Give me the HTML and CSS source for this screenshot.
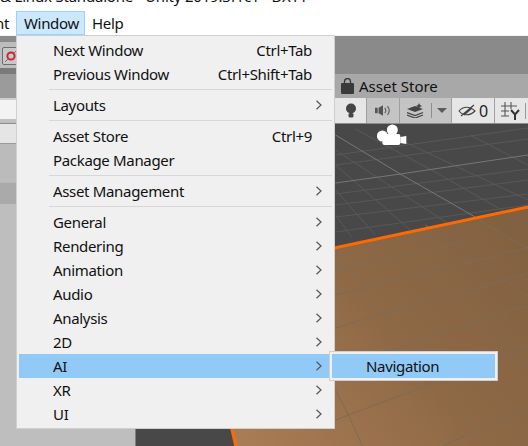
FILE: index.html
```html
<!DOCTYPE html>
<html lang="en">
<head>
<meta charset="utf-8">
<title>Unity Window menu</title>
<link rel="stylesheet" href="styles.css">
</head>
<body>
<div class="app">
  <div class="titlebar"><span class="title">&amp; Linux Standalone - Unity 2019.3f1c1 &lt;DX11&gt;</span></div>
  <div class="menubar">
    <span class="top-item cut">nt</span>
    <span class="top-item active">Window</span>
    <span class="top-item help">Help</span>
  </div>
  <div class="editor">
    <div class="left-pane">
      <div class="lp strip-a"></div>
      <div class="lp tools">
        <span class="tool-btn"><svg width="14" height="17" viewBox="0 0 14 17"><circle cx="8" cy="8" r="3.6" fill="none" stroke="#c9262f" stroke-width="2"/><path d="M2 14l3-3M11 5l3-3" stroke="#777" stroke-width="1"/></svg></span>
      </div>
      <div class="lp strip-b"></div>
      <div class="lp head"></div>
      <div class="lp line-a"></div>
      <div class="lp row-a"></div>
      <div class="lp gap-a"></div>
      <div class="lp row-b"></div>
      <div class="lp gap-b"></div>
      <div class="lp band"></div>
      <div class="lp rest"></div>
    </div>
    <div class="right-pane">
      <div class="top-strip"></div>
      <div class="tabbar">
        <svg class="bag" width="13" height="16" viewBox="0 0 13 16"><path d="M1 5h11a1 1 0 0 1 1 1v9a1 1 0 0 1-1 1H1a1 1 0 0 1-1-1V6a1 1 0 0 1 1-1z" fill="#3a3a3a"/><path d="M3.5 6V3.5a3 3 0 0 1 6 0V6" fill="none" stroke="#3a3a3a" stroke-width="1.4"/></svg>
        <span class="tab-label">Asset Store</span>
      </div>
      <div class="scene-tools">
        <div class="st st-bulb"><svg width="12" height="15" viewBox="0 0 12 15"><circle cx="6" cy="5.500" r="5" fill="#444"/><rect x="3.500" y="10" width="5" height="4.500" rx="1.500" fill="#444"/></svg></div>
        <div class="st st-audio"><svg width="16" height="11" viewBox="0 0 18 12"><path d="M0 3h3v6H0zM4 3l5-3v12L4 9z" fill="#555"/><path d="M11 3c1.400 1.800 1.400 4.200 0 6M14 1c2.400 3 2.400 7 0 10" fill="none" stroke="#555" stroke-width="1.200"/></svg></div>
        <div class="st st-fx">
          <svg width="18" height="15" viewBox="0 0 18 15"><path d="M0 6l8 3 8-3-8-3z" fill="#444"/><path d="M0 9.500l8 3 8-3M0 12l8 3 8-3" fill="none" stroke="#444" stroke-width="1.300"/><path d="M12 0l1 2 2 1-2 1-1 2-1-2-2-1 2-1z" fill="#444"/></svg>
          <i class="fx-sep"></i>
          <i class="fx-tri"></i>
        </div>
        <div class="st st-eye">
          <svg width="18" height="15" viewBox="0 0 18 15"><path d="M1 8c4-5 11-5 16 0-5 5-12 5-16 0z" fill="none" stroke="#444" stroke-width="1.100"/><path d="M3 13L16 2M6 12l8-7" stroke="#444" stroke-width="1.300"/></svg>
          <span class="count">0</span>
        </div>
        <div class="st st-gizmo">
          <svg width="20" height="19" viewBox="0 0 20 19"><path d="M4 1v14M10 1v7M0 5h16M0 10h8M0 15h8" fill="none" stroke="#555" stroke-width="1.100"/><path d="M10 9l4 4.500L18 9M14 13v6" fill="none" stroke="#333" stroke-width="2"/></svg>
          <i class="gizmo-sep"></i>
        </div>
      </div>
      <div class="scene">
        <svg class="scene-art" viewBox="135 124 393 322" preserveAspectRatio="none" aria-hidden="true">
          <defs>
            <linearGradient id="ground" gradientUnits="userSpaceOnUse" x1="528" y1="207" x2="235" y2="446">
              <stop offset="0" stop-color="#806041"/>
              <stop offset="0.5" stop-color="#8f6946"/>
              <stop offset="1" stop-color="#aa7d55"/>
            </linearGradient>
          </defs>
          <rect x="135" y="124" width="393" height="322" fill="#484848"/>
          <g class="grid-minor">
            <path d="M335 155L528 128M335 165L528 139M335 194L528 169M335 205L528 180M335 217L528 194M335 232L528 205"/>
            <path d="M355 129L435 172L528 225M400 140L528 200M335 165L410 230M335 190L375 235M335 215L352 238M470 135L528 165M335 150L450 225"/>
          </g>
          <path class="grid-major" d="M335 135L400 174L475 217M335 183L400 174L528 155"/>
          <polygon points="528,207 196,277 235,446 528,446" fill="url(#ground)"/>
          <g class="grid-brown">
            <path d="M335 270L405 255L468 240M335 295L363 288L423 273L528 248M335 328L383 313L448 297L505 280L528 273M368 355L407 345L477 322L528 305M490 357L528 350M335 420L348 415L437 382M442 446L477 431L528 408"/>
            <path d="M335 253L363 288L383 313L407 345L425 370M385 240L423 273L448 297L477 322L513 355L528 368M425 225L453 243L505 280L528 297M437 382L477 431L492 446M335 390L348 415L362 446M475 217L512 240L528 248"/>
          </g>
          <polyline class="edge" points="528,207 196,277 235,446"/>
          <g fill="#fff">
            <circle cx="382" cy="136" r="5.500"/>
            <circle cx="392" cy="130" r="5.500"/>
            <rect x="382" y="134" width="18" height="11" rx="2"/>
            <polygon points="400,137 406,136 406,144 400,143"/>
          </g>
        </svg>
      </div>
    </div>
  </div>

  <div class="menu">
    <div class="row"><span>Next Window</span><span>Ctrl+Tab</span><span></span></div>
    <div class="row"><span>Previous Window</span><span>Ctrl+Shift+Tab</span><span></span></div>
    <div class="sep"></div>
    <div class="row"><span>Layouts</span><span></span><svg class="chev" width="6" height="10" viewBox="0 0 6 10"><path d="M0.500 0.800L5 5L0.500 9.200"/></svg></div>
    <div class="sep"></div>
    <div class="row"><span>Asset Store</span><span>Ctrl+9</span><span></span></div>
    <div class="row"><span>Package Manager</span><span></span><span></span></div>
    <div class="sep"></div>
    <div class="row"><span>Asset Management</span><span></span><svg class="chev" width="6" height="10" viewBox="0 0 6 10"><path d="M0.500 0.800L5 5L0.500 9.200"/></svg></div>
    <div class="sep"></div>
    <div class="row"><span>General</span><span></span><svg class="chev" width="6" height="10" viewBox="0 0 6 10"><path d="M0.500 0.800L5 5L0.500 9.200"/></svg></div>
    <div class="row"><span>Rendering</span><span></span><svg class="chev" width="6" height="10" viewBox="0 0 6 10"><path d="M0.500 0.800L5 5L0.500 9.200"/></svg></div>
    <div class="row"><span>Animation</span><span></span><svg class="chev" width="6" height="10" viewBox="0 0 6 10"><path d="M0.500 0.800L5 5L0.500 9.200"/></svg></div>
    <div class="row"><span>Audio</span><span></span><svg class="chev" width="6" height="10" viewBox="0 0 6 10"><path d="M0.500 0.800L5 5L0.500 9.200"/></svg></div>
    <div class="row"><span>Analysis</span><span></span><svg class="chev" width="6" height="10" viewBox="0 0 6 10"><path d="M0.500 0.800L5 5L0.500 9.200"/></svg></div>
    <div class="row"><span>2D</span><span></span><svg class="chev" width="6" height="10" viewBox="0 0 6 10"><path d="M0.500 0.800L5 5L0.500 9.200"/></svg></div>
    <div class="row selected"><span>AI</span><span></span><svg class="chev" width="6" height="10" viewBox="0 0 6 10"><path d="M0.500 0.800L5 5L0.500 9.200"/></svg>
      <div class="submenu"><div class="sub-row">Navigation</div></div>
    </div>
    <div class="row"><span>XR</span><span></span><svg class="chev" width="6" height="10" viewBox="0 0 6 10"><path d="M0.500 0.800L5 5L0.500 9.200"/></svg></div>
    <div class="row"><span>UI</span><span></span><svg class="chev" width="6" height="10" viewBox="0 0 6 10"><path d="M0.500 0.800L5 5L0.500 9.200"/></svg></div>
  </div>
</div>
</body>
</html>
```

FILE: styles.css
```css
* { box-sizing: border-box; }
html, body { margin: 0; padding: 0; }
body {
  width: 528px;
  height: 446px;
  overflow: hidden;
  background: #fff;
  font-family: "Noto Sans", "Open Sans", sans-serif;
  font-size: 15px;
  letter-spacing: -0.33px;
  color: #111;
}
.app {
  position: relative;
  width: 528px;
  height: 446px;
  display: flex;
  flex-direction: column;
  overflow: hidden;
}

/* window chrome */
.titlebar {
  height: 11px;
  overflow: hidden;
  background: #fff;
  flex: none;
}
.title {
  display: block;
  margin-top: -14px;
  line-height: 20px;
  white-space: nowrap;
  font-size: 15px;
  letter-spacing: -0.2px;
}
.menubar {
  height: 24px;
  display: flex;
  background: #fff;
  flex: none;
}
.top-item {
  line-height: 22px;
  height: 24px;
  padding: 0 7px;
  border: 1px solid transparent;
}
.top-item.cut { width: 16px; padding: 0; text-indent: -5px; overflow: hidden; border: 0; line-height: 24px; }
.top-item.active {
  width: 69px;
  background: #cce8ff;
  border-color: #99d1ff;
}
.top-item.help { padding-left: 6px; }

/* editor background */
.editor {
  flex: 1;
  display: flex;
  min-height: 0;
  border-top: 1px solid #f4f4f4;
}
.left-pane {
  width: 135px;
  flex: none;
  display: flex;
  flex-direction: column;
  background: #bebebe;
}
.lp { flex: none; }
.strip-a { height: 6px; background: #8a8a8a; }
.tools { height: 26px; background: #bdbdbd; padding: 5px 0 0 2px; }
.tool-btn {
  display: block;
  width: 30px;
  height: 18px;
  background: #c8c8c8;
  border: 1px solid #6e6e6e;
  border-radius: 2px;
}
.tool-btn svg { display: block; }
.strip-b { height: 6px; background: #7a7a7a; }
.head { height: 24px; background: #9b9b9b; }
.line-a { height: 2px; background: #cfcfcf; }
.row-a { height: 19px; background: #f3f3f3; }
.gap-a { height: 5px; background: #bfbfbf; border-bottom: 1px solid #8c8c8c; }
.row-b { height: 19px; background: #e5e5e5; }
.gap-b { height: 40px; background: #bbb; border-top: 1px solid #9a9a9a; }
.band { height: 21px; background: #aaa; }
.rest { flex: 1; background: #bebebe; }

.right-pane {
  flex: 1;
  min-width: 0;
  display: flex;
  flex-direction: column;
}
.top-strip { height: 38px; background: #8a8a8a; flex: none; }
.tabbar {
  height: 24px;
  flex: none;
  background: #a8a8a8;
  display: flex;
  align-items: center;
  gap: 5px;
  padding-left: 206px;
}
.bag { flex: none; }
.tab-label { font-size: 15px; letter-spacing: 0; color: #111; white-space: nowrap; }
.scene-tools {
  height: 26px;
  flex: none;
  display: flex;
  padding-left: 200px;
  background: #dcdcdc;
  border-bottom: 1px solid #8c8c8c;
}
.st {
  display: flex;
  align-items: center;
  justify-content: center;
  border-right: 1px solid #a0a0a0;
  flex: none;
}
.st-bulb { width: 32px; background: #e6e6e6; }
.st-audio { width: 33px; background: #c4c4c4; }
.st-fx { width: 52px; background: #c4c4c4; justify-content: flex-start; padding-left: 7px; }
.fx-sep { width: 1px; height: 15px; background: #8e8e8e; margin-left: 6px; }
.fx-tri {
  width: 0;
  height: 0;
  margin-left: 5px;
  border-style: solid;
  border-width: 5px 5.500px 0;
  border-color: #5a5a5a transparent transparent;
}
.st-eye { width: 43px; background: #e6e6e6; gap: 3px; }
.count { font-size: 16px; letter-spacing: 0; color: #222; line-height: 20px; }
.st-gizmo { flex: 1; width: 34px; background: #e6e6e6; border-right: 0; justify-content: flex-start; padding-left: 6px; gap: 4px; }
.gizmo-sep { width: 1px; height: 16px; background: #999; }

.scene { flex: 1; min-height: 0; border-left: 1px solid #808080; }
.scene-art { display: block; width: 100%; height: 100%; }
.grid-minor path { fill: none; stroke: #585858; stroke-width: 1; }
.grid-major { fill: none; stroke: #767676; stroke-width: 1; }
.grid-brown path { fill: none; stroke: #7d6a56; stroke-width: 1; }
.edge { fill: none; stroke: #ff6a00; stroke-width: 3; }

/* dropdown menu */
.menu {
  position: absolute;
  left: 16px;
  top: 35px;
  width: 319px;
  height: 394px;
  padding: 2px;
  background: #f0f0f0;
  border: 1px solid #cfcfcf;
}
.row {
  position: relative;
  height: 24px;
  line-height: 24px;
  display: grid;
  grid-template-columns: 1fr auto 20px;
  align-items: center;
  padding-left: 34px;
  white-space: nowrap;
}
.row.selected { background: #91c9f7; }
.chev { justify-self: end; margin-right: 10px; }
.chev path { fill: none; stroke: #555; stroke-width: 1.200; }
.sep { height: 7px; padding: 3px 0 3px 30px; }
.sep::after { content: ""; display: block; height: 1px; background: #d7d7d7; }
.submenu {
  position: absolute;
  left: 310px;
  top: -3px;
  width: 169px;
  height: 30px;
  padding: 2px;
  background: #f0f0f0;
  border: 1px solid #cfcfcf;
}
.sub-row {
  height: 24px;
  line-height: 24px;
  padding-left: 34px;
  background: #91c9f7;
}
```
